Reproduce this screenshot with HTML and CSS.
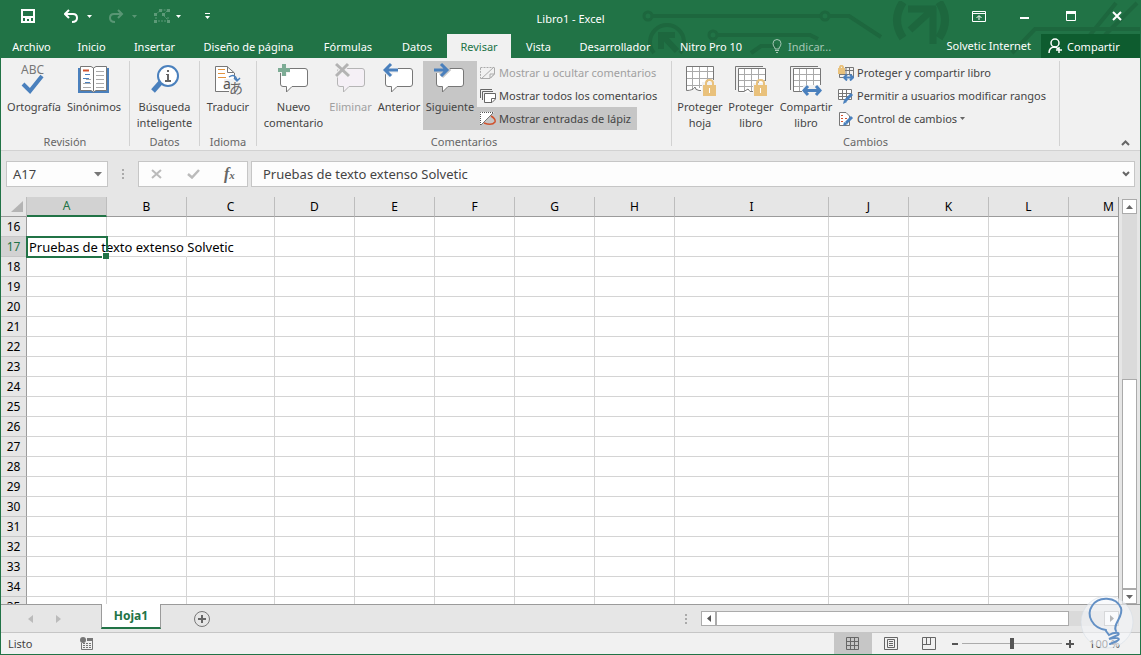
FILE: index.html
```html
<!DOCTYPE html>
<html lang="es">

<head>
    <meta charset="UTF-8">
    <meta name="viewport" content="width=device-width, initial-scale=1.0">
    <title>Libro1 - Excel</title>
    <link rel="stylesheet" href="styles.css">
</head>

<body>
    <header class="header">
        <svg class="circuit" width="500" height="57" fill="none" stroke="#1d673e" stroke-width="4">
            <circle cx="8" cy="15" r="4" stroke-width="3" />
            <path d="M12 15H181" />
            <circle cx="185" cy="15" r="4" stroke-width="3" />
            <path d="M189 15H209L241 36" />
            <circle cx="73" cy="34" r="4" stroke-width="3" />
            <path d="M77 34H170L178 38" />
            <path d="M14 52A17 17 0 1 1 40 52" />
            <path d="M21 34H35M21 31V48M22 34L37 50" stroke-width="6" />
            <path d="M111 52L121 45H137" />
            <path d="M263 1Q251 19 263 37M299 1Q311 19 299 37" stroke-width="8" />
            <path d="M270 29L292 9M268 8H296M293 6V43" stroke-width="7" />
            <path d="M372 52L395 28H500M450 34L476 2M465 34L497 2" />
        </svg>
        <div class="title-bar">
            <div class="quick-access">
                <button class="save" aria-label="Guardar">
                    <svg width="14" height="14" fill="none" stroke="#fff" stroke-width="2"><path d="M1 1H13V13H1ZM2 8H12" /><path d="M4 9H10V13H8V10H6V13H4Z" fill="#fff" stroke="none" /></svg>
                </button>
                <button class="split" aria-label="Deshacer">
                    <svg width="15" height="14" fill="none" stroke="#fff" stroke-width="2"><path d="M5 1L1 5L5 9M1 5H9Q13 5 13 9Q13 13 8 13" /></svg>
                    <svg width="5" height="3"><path d="M0 0H5L2.500 3Z" fill="#fff" /></svg>
                </button>
                <button class="split faded" aria-label="Rehacer">
                    <svg width="15" height="14" fill="none" stroke="#fff" stroke-width="2"><path d="M9 1L13 5L9 9M13 5H5Q1 5 1 9Q1 13 6 13" /></svg>
                    <svg width="5" height="3"><path d="M0 0H5L2.500 3Z" fill="#fff" /></svg>
                </button>
                <button class="split shapes" aria-label="Seleccionar objetos">
                    <svg width="16" height="14" fill="none" stroke="#5d9a78"><path d="M2 5V12H14V8M2 5L7 1H14L9 6L14 11" stroke-dasharray="2 1" /><path d="M0 4H3V7H0ZM5 0H8V3H5ZM13 0H16V3H13ZM0 11H3V14H0ZM13 11H16V14H13ZM8 4H11V7H8Z" fill="#5d9a78" stroke="none" /></svg>
                    <svg width="5" height="3"><path d="M0 0H5L2.500 3Z" fill="#fff" /></svg>
                </button>
                <button class="customize" aria-label="Personalizar barra">
                    <svg width="5" height="6" fill="#fff"><path d="M0 0H5V1H0ZM0 3H5L2.500 6Z" /></svg>
                </button>
            </div>
            <h1>Libro1 - Excel</h1>
            <div class="window-buttons">
                <button aria-label="Opciones de la cinta"><svg width="14" height="11" fill="none" stroke="#fff"><path d="M.5 .5H13.500V10.500H.5ZM1 2.500H13M7 9V5M4.500 7L7 4.500L9.500 7" /></svg></button>
                <button aria-label="Minimizar"><svg width="10" height="11"><path d="M0 6H9V8H0Z" fill="#fff" /></svg></button>
                <button aria-label="Maximizar"><svg width="10" height="10" fill="none" stroke="#fff"><path d="M.5 .5H9.500V9.500H.5Z" /><path d="M0 1.500H10" stroke-width="3" /></svg></button>
                <button aria-label="Cerrar"><svg width="10" height="10"><path d="M1 1L9 9M9 1L1 9" stroke="#fff" stroke-width="2" /></svg></button>
            </div>
        </div>
        <div class="tab-bar">
            <nav class="tabs">
                <button>Archivo</button>
                <button>Inicio</button>
                <button>Insertar</button>
                <button>Diseño de página</button>
                <button>Fórmulas</button>
                <button>Datos</button>
                <button class="active">Revisar</button>
                <button>Vista</button>
                <button>Desarrollador</button>
                <button>Nitro Pro 10</button>
            </nav>
            <button class="tell-me">
                <svg width="10" height="14" fill="none" stroke="#a6c7b5"><path d="M3 10V9Q1 7 1 4.500A4 4 0 0 1 9 4.500Q9 7 7 9V10ZM3 11.500H7M4 13.500H6" /></svg>
                Indicar...
            </button>
            <span class="user">Solvetic Internet</span>
            <button class="share">
                <svg width="15" height="16" fill="none" stroke="#fff" stroke-width="1.500"><circle cx="7" cy="5" r="4" /><path d="M1 15Q1 9 7 9M6 9Q9 9 10 11M11 9V15M8 12H14" /></svg>
                Compartir
            </button>
        </div>
    </header>

    <main class="ribbon">
        <section class="group revision">
            <div class="tools">
                <button class="big">
                    <svg width="28" height="34"><text x="1" y="12" class="abc">ABC</text><path d="M3 22L10 29L22 14" fill="none" stroke="#4a80bd" stroke-width="4" /></svg>
                    Ortografía
                </button>
                <button class="big">
                    <svg width="32" height="34" fill="none"><path d="M0 6H31V31H0Z" fill="#4a80bd" /><path d="M2.500 4.500H13L15.500 6L18 4.500H28.500V28.500H18L15.500 30L13 28.500H2.500Z" fill="#fff" stroke="#777" /><path d="M15.500 6V29" stroke="#777" /><path d="M18 9.500H26M18 13.500H26M18 17.500H26M18 21.500H26M5 21.500H13M5 25.500H13M18 25.500H26M8 17.500H13" stroke="#aaa" /><path d="M5 8.500H11" stroke="#d0532f" stroke-width="2" /><path d="M7 12.500H12M5 16.500H11M7 20.500H12" stroke="#4a80bd" /></svg>
                    Sinónimos
                </button>
            </div>
            <h2>Revisión</h2>
        </section>
        <section class="group data">
            <div class="tools">
                <button class="big">
                    <svg width="28" height="34"><path d="M10 20L2 29" stroke="#4a80bd" stroke-width="5" /><circle cx="17" cy="14" r="10" fill="#fff" stroke="#4a80bd" stroke-width="2" /><path d="M16 8H18V10H16ZM15 12H18V18H20V20H14V18H16V13H15Z" fill="#666" /></svg>
                    Búsqueda<br>inteligente
                </button>
            </div>
            <h2>Datos</h2>
        </section>
        <section class="group language">
            <div class="tools">
                <button class="big">
                    <svg width="30" height="34"><path d="M2.500 4.500H14L21.500 11V29.500H2.500Z" fill="#fff" stroke="#777" /><path d="M14.500 4.500V10.500H21" fill="none" stroke="#777" /><path d="M5 7.500H12M5 11.500H12M5 15.500H13" stroke="#e3943e" /><path d="M11 17H30V34H16V28H11Z" fill="#f1f1f1" /><path d="M16 15Q22 11 24 18M21 16L24 19L27 16" fill="none" stroke="#4a80bd" stroke-width="1.500" /><text x="10" y="27" class="latin">a</text><text x="16" y="31" class="kana">あ</text></svg>
                    Traducir
                </button>
            </div>
            <h2>Idioma</h2>
        </section>
        <section class="group comments">
            <div class="tools">
                <button class="big">
                    <svg width="32" height="34"><path d="M5 6.500H27Q29.500 6.500 29.500 9V22Q29.500 24.500 27 24.500H14L8.500 30V24.500H5Q2.500 24.500 2.500 22V9Q2.500 6.500 5 6.500Z" fill="#fff" stroke="#777" /><path d="M0 8H12M6 2V14" stroke="#f1f1f1" stroke-width="6" /><path d="M0 8H12M6 2V14" stroke="#7dac95" stroke-width="4" /></svg>
                    Nuevo<br>comentario
                </button>
                <button class="big" disabled>
                    <svg width="32" height="34"><path d="M5 6.500H27Q29.500 6.500 29.500 9V22Q29.500 24.500 27 24.500H14L8.500 30V24.500H5Q2.500 24.500 2.500 22V9Q2.500 6.500 5 6.500Z" fill="#f5f0f6" stroke="#b5b5b5" /><path d="M1 2L14 14M13 2L1 14" stroke="#f1f1f1" stroke-width="5" /><path d="M1 2L14 14M13 2L1 14" stroke="#b3b3b3" stroke-width="3" /></svg>
                    Eliminar
                </button>
                <button class="big">
                    <svg width="32" height="34"><path d="M5 6.500H27Q29.500 6.500 29.500 9V22Q29.500 24.500 27 24.500H14L8.500 30V24.500H5Q2.500 24.500 2.500 22V9Q2.500 6.500 5 6.500Z" fill="#fff" stroke="#777" /><path d="M1 8H15M8 2L3 8L8 14" fill="none" stroke="#f1f1f1" stroke-width="6" /><path d="M2 8H15M8 2L2 8L8 14" fill="none" stroke="#4a80bd" stroke-width="3" /></svg>
                    Anterior
                </button>
                <button class="big pressed">
                    <svg width="32" height="34"><path d="M5 6.500H27Q29.500 6.500 29.500 9V22Q29.500 24.500 27 24.500H14L8.500 30V24.500H5Q2.500 24.500 2.500 22V9Q2.500 6.500 5 6.500Z" fill="#fff" stroke="#777" /><path d="M0 8H13M7 2L13 8L7 14" fill="none" stroke="#c6c6c6" stroke-width="6" /><path d="M0 8H13M7 2L13 8L7 14" fill="none" stroke="#4a80bd" stroke-width="3" /></svg>
                    Siguiente
                </button>
                <div class="small-tools">
                    <button disabled><svg width="16" height="16" fill="none" stroke="#aaa"><path d="M.5 2.500H14.500V9L10 13.500H.5Z" stroke-dasharray="2 1" /><path d="M1 14L14 2M14.500 3V9L10 13.500H1M10 13V9H14" /></svg>Mostrar u ocultar comentarios</button>
                    <button><svg width="16" height="16" fill="none" stroke="#666"><path d="M.5 10V1.500H12M2.500 12V3.500H13" /><path d="M4.500 5.500H15.500V11L12 14.500H4.500ZM11.500 14V10.500H15" fill="#fff" /></svg>Mostrar todos los comentarios</button>
                    <button class="pressed"><svg width="16" height="16" fill="none"><path d="M0 1H14L1 14H0Z" fill="#fff" /><path d="M.5 14V1.500H14" stroke="#555" stroke-dasharray="1 1" /><path d="M1 14L13 2" stroke="#777" /><path d="M11 5Q16 8 15 11Q12 15 4 12" stroke="#d0532f" stroke-width="1.500" /></svg>Mostrar entradas de lápiz</button>
                </div>
            </div>
            <h2>Comentarios</h2>
        </section>
        <section class="group changes">
            <div class="tools">
                <button class="big">
                    <svg width="32" height="34" fill="none"><path d="M2.500 4.500H29.500V28.500H15L12 25.500L8 28.500H2.500Z" fill="#fff" /><path d="M8.500 5V28M15.500 5V26M23.500 5V26M3 9.500H29M3 16.500H29M3 23.500H29" stroke="#aaa" /><path d="M17 28.500H15Q11 28 11 25Q9 28.500 2.500 28.500V4.500H29.500V18" stroke="#777" /><path d="M18 20H32V34H18Z" fill="#f1f1f1" /><path d="M22 24V21Q22 18 25.500 18Q29 18 29 21V24" stroke="#e9c17b" stroke-width="2" /><path d="M19 23H32V34H19Z" fill="#e9c17b" /><path d="M25 26H26V31H25Z" fill="#fff" /></svg>
                    Proteger<br>hoja
                </button>
                <button class="big">
                    <svg width="32" height="34" fill="none"><path d="M.5 28V4.500H28" stroke="#777" /><path d="M3.500 6.500H30.500V30.500H3.500Z" fill="#fff" /><path d="M9.500 7V29M16.500 7V29M23.500 7V29M4 12.500H30M4 18.500H30M4 24.500H30" stroke="#aaa" /><path d="M18 29.500H15L13 27L9 29.500H3.500V6.500H30.500V19" stroke="#777" /><path d="M18 21H32V34H18Z" fill="#f1f1f1" /><path d="M22 24V21Q22 18 25.500 18Q29 18 29 21V24" stroke="#e9c17b" stroke-width="2" /><path d="M19 23H32V34H19Z" fill="#e9c17b" /><path d="M25 26H26V31H25Z" fill="#fff" /></svg>
                    Proteger<br>libro
                </button>
                <button class="big">
                    <svg width="32" height="34" fill="none"><path d="M.5 28V4.500H28" stroke="#777" /><path d="M3.500 6.500H30.500V29.500H3.500Z" fill="#fff" /><path d="M9.500 7V29M16.500 7V29M23.500 7V29M4 12.500H30M4 18.500H30M4 24.500H30" stroke="#aaa" /><path d="M12 29.500H3.500V6.500H30.500V24" stroke="#777" /><path d="M13 23H32V34H13Z" fill="#f1f1f1" /><path d="M14 28.500H30M18 24L14 28.500L18 33M26 24L30 28.500L26 33" stroke="#4a80bd" stroke-width="3" /></svg>
                    Compartir<br>libro
                </button>
                <div class="small-tools">
                    <button><svg width="16" height="16" fill="none"><path d="M7 2.500H15.500V12M1.500 8V12.500H6M7 5.500H15M8 2V9M11.500 2V9M2 9.500H14" stroke="#777" /><path d="M2 4V2Q3.500 -1 5 2V4" stroke="#e9c17b" stroke-width="2" /><path d="M0 3H7V9H0Z" fill="#e9c17b" /><path d="M6 12.500H15M9 9.500L6 12.500L9 15.500M12 9.500L15 12.500L12 15.500" stroke="#4a80bd" stroke-width="2" /></svg>Proteger y compartir libro</button>
                    <button><svg width="16" height="16" fill="none"><path d="M.5 1.500H13.500V11.500H.5ZM1 5.500H13M1 8.500H13M4.500 2V11M8.500 2V11" fill="#fff" stroke="#777" /><path d="M14 6L7 13" stroke="#4a80bd" stroke-width="3" /><path d="M5 16L6 12L9 14Z" fill="#4a80bd" /></svg>Permitir a usuarios modificar rangos</button>
                    <button><svg width="16" height="16" fill="none"><path d="M1.500 1.500H8L11.500 5V14.500H1.500Z" fill="#fff" stroke="#777" /><path d="M3 4.500H5M3 7.500H5M3 10.500H5M7 7.500H9" stroke="#d0532f" /><path d="M14 6L8 12" stroke="#4a80bd" stroke-width="3" /><path d="M5 15L6 11L10 13Z" fill="#4a80bd" /></svg>Control de cambios<svg width="5" height="3"><path d="M0 0H5L2.500 3Z" fill="#666" /></svg></button>
                </div>
            </div>
            <h2>Cambios</h2>
        </section>
        <button class="collapse" aria-label="Contraer la cinta"><svg width="9" height="6" fill="none" stroke="#666" stroke-width="2"><path d="M1 5L4.500 1.500L8 5" /></svg></button>
    </main>

    <div class="formula-bar">
        <button class="name-box">A17<svg width="8" height="5"><path d="M0 0H8L4 4.500Z" fill="#777" /></svg></button>
        <svg class="grip" width="2" height="10" fill="#aaa"><path d="M0 0H2V2H0ZM0 4H2V6H0ZM0 8H2V10H0Z" /></svg>
        <div class="formula-buttons">
            <button aria-label="Cancelar"><svg width="11" height="10"><path d="M1 1L10 9M10 1L1 9" stroke="#bbb" stroke-width="2" /></svg></button>
            <button aria-label="Introducir"><svg width="13" height="10" fill="none"><path d="M1 5L5 8.500L12 1" stroke="#bbb" stroke-width="2.500" /></svg></button>
            <button class="fx">f<small>x</small></button>
        </div>
        <div class="formula">
            <input type="text" aria-label="Barra de fórmulas" value="Pruebas de texto extenso Solvetic">
            <svg width="8" height="6" fill="none" stroke="#666" stroke-width="2"><path d="M1 1L4 4L7 1" /></svg>
        </div>
    </div>

    <div class="sheet-area">
        <div class="sheet">
            <table>
                <thead>
                    <tr>
                        <th class="corner"><svg width="13" height="12"><path d="M12 0V11H0Z" fill="#b4b4b4" /></svg></th>
                        <th class="selected">A</th>
                        <th>B</th>
                        <th class="wide">C</th>
                        <th>D</th>
                        <th>E</th>
                        <th>F</th>
                        <th>G</th>
                        <th>H</th>
                        <th class="widest">I</th>
                        <th>J</th>
                        <th>K</th>
                        <th>L</th>
                        <th>M</th>
                    </tr>
                </thead>
                <tbody id="rows"></tbody>
            </table>
        </div>
        <div class="scroll-v">
            <button aria-label="Arriba"><svg width="7" height="4"><path d="M0 4L3.500 0L7 4Z" fill="#666" /></svg></button>
            <div class="track"><div class="thumb"></div></div>
            <button aria-label="Abajo"><svg width="7" height="4"><path d="M0 0L3.500 4L7 0Z" fill="#666" /></svg></button>
        </div>
    </div>

    <div class="sheet-tabs">
        <div class="sheet-nav">
            <button aria-label="Hoja anterior"><svg width="5" height="8"><path d="M5 0V8L0 4Z" fill="#bbb" /></svg></button>
            <button aria-label="Hoja siguiente"><svg width="5" height="8"><path d="M0 0V8L5 4Z" fill="#bbb" /></svg></button>
        </div>
        <button class="sheet-tab">Hoja1</button>
        <button class="add-sheet" aria-label="Hoja nueva"><svg width="16" height="16" fill="none" stroke="#777"><circle cx="8" cy="8" r="7.500" /><path d="M8 4V12M4 8H12" stroke="#666" stroke-width="2" /></svg></button>
        <svg class="grip" width="2" height="10" fill="#aaa"><path d="M0 0H2V2H0ZM0 4H2V6H0ZM0 8H2V10H0Z" /></svg>
        <div class="scroll-h">
            <button aria-label="Izquierda"><svg width="4" height="7"><path d="M4 0V7L0 3.500Z" fill="#555" /></svg></button>
            <div class="track"><div class="thumb"></div></div>
            <button aria-label="Derecha"><svg width="4" height="7"><path d="M0 0V7L4 3.500Z" fill="#555" /></svg></button>
        </div>
    </div>

    <footer class="status-bar">
        <span>Listo</span>
        <button class="macro" aria-label="Grabar macro"><svg width="14" height="13" fill="none" stroke="#777"><path d="M3 6.500H12M3 8.500H12M3 10.500H12" stroke-dasharray="2 1" /><path d="M1.500 6V12.500H12.500V4" /><path d="M7 2.500H13" stroke-width="3" /><circle cx="3" cy="3" r="3" fill="#777" stroke="none" /></svg></button>
        <div class="views">
            <button class="pressed" aria-label="Normal"><svg width="14" height="14" fill="none" stroke="#666"><path d="M.5 .5H12.500V12.500H.5ZM4.500 1V12M8.500 1V12M1 4.500H12M1 8.500H12" /></svg></button>
            <button aria-label="Diseño de página"><svg width="14" height="14" fill="none" stroke="#666"><path d="M.5 .5H13.500V12.500H.5ZM3.500 2.500H10.500V10.500H3.500ZM5 4.500H9M5 6.500H9M5 8.500H9" /></svg></button>
            <button aria-label="Saltos de página"><svg width="14" height="14" fill="none" stroke="#666"><path d="M.5 .5H13.500V12.500H.5ZM1 7.500H9M4.500 1V7M8.500 1V8" /></svg></button>
        </div>
        <button class="zoom-step" aria-label="Alejar"><svg width="6" height="2"><path d="M0 0H6V2H0Z" fill="#555" /></svg></button>
        <input class="zoom" type="range" aria-label="Zoom" min="0" max="200" value="100">
        <button class="zoom-step" aria-label="Acercar"><svg width="8" height="8"><path d="M0 3H3V0H5V3H8V5H5V8H3V5H0Z" fill="#555" /></svg></button>
        <span class="percent">100 %</span>
    </footer>

    <svg class="badge" width="54" height="54" fill="none"><circle cx="27" cy="27" r="26" fill="#f5f7fa" fill-opacity=".6" stroke="#d5dde6" stroke-opacity=".6" /><g stroke="#6390c5" stroke-width="2" stroke-linecap="round"><path d="M26 35C12 33 6 20 12 11C18 1 36 1 41 13C44 21 32 30 36 36" /><path d="M26 36L29 40C34 37 41 37 38 40L29 44C36 42 42 43 37 46L30 49" /></g></svg>

    <script>
        let rowsRef = document.getElementById("rows");

        for (let i = 16; i <= 35; i++) {
            let row = document.createElement("tr");
            row.innerHTML = "<th>" + i + "</th>" + "<td></td>".repeat(13);
            if (i == 17) {
                row.className = "current";
                row.cells[1].className = "cursor";
                row.cells[1].innerText = "Pruebas de texto extenso Solvetic";
            }
            rowsRef.appendChild(row);
        }
    </script>
</body>

</html>
```
FILE: styles.css
```css
* {
    padding: 0;
    margin: 0;
    box-sizing: border-box;
    font-family: "Noto Sans", "Open Sans", sans-serif;
}

body {
    height: 100vh;
    display: flex;
    flex-direction: column;
    overflow: hidden;
    position: relative;
    border: 1px solid #217346;
    background: #e6e6e6;
    font-size: 11px;
    color: #444444;
}

button {
    border: none;
    background: none;
    color: inherit;
    font-size: inherit;
    white-space: nowrap;
}

svg {
    display: block;
    flex-shrink: 0;
}

/* title and tabs */

.header {
    position: relative;
    background: #217346;
    color: #ffffff;
}

.circuit {
    position: absolute;
    right: 0;
    top: 0;
}

.title-bar {
    position: relative;
    height: 33px;
    display: grid;
    grid-template-columns: 1fr auto 1fr;
    align-items: center;
}

.title-bar h1 {
    padding-top: 2px;
    font-size: 11px;
    font-weight: normal;
}

.quick-access {
    display: flex;
    align-items: center;
    gap: 17px;
    padding: 0 0 3px 20px;
}

.save {
    padding-right: 12px;
}

.customize {
    padding-left: 7px;
}

.split {
    display: flex;
    align-items: center;
    gap: 8px;
}

.faded {
    opacity: 0.25;
}

.shapes {
    gap: 6px;
}

.window-buttons {
    display: flex;
    justify-content: flex-end;
    padding-bottom: 3px;
}

.window-buttons button {
    width: 46px;
    display: flex;
    align-items: center;
    justify-content: center;
}

.tab-bar {
    position: relative;
    height: 24px;
    display: flex;
}

.tabs {
    display: grid;
    grid-template-columns: 61px 59px 67px 121px 78px 60px 64px 55px 98px 94px;
}

.tabs .active {
    background: #f1f1f1;
    color: #217346;
}

.tell-me {
    display: flex;
    align-items: center;
    gap: 6px;
    padding-left: 14px;
    color: #a6c7b5;
}

.user {
    margin-left: auto;
    padding-right: 10px;
    line-height: 24px;
}

.share {
    width: 99px;
    display: flex;
    align-items: center;
    gap: 4px;
    padding-left: 7px;
    background: #0e5c2f;
}

/* ribbon */

.ribbon {
    display: flex;
    height: 93px;
    padding: 3px 0 4px;
    background: #f1f1f1;
    border-bottom: 1px solid #d2d2d2;
}

.group {
    display: flex;
    flex-direction: column;
    justify-content: space-between;
    border-right: 1px solid #d2d2d2;
}

.group h2 {
    font-size: 11px;
    font-weight: normal;
    line-height: 9px;
    text-align: center;
    color: #666666;
}

.tools {
    display: grid;
    justify-content: start;
}

.revision {
    width: 129px;
}

.revision .tools {
    grid-template-columns: 66px 54px;
}

.data {
    width: 70px;
}

.language {
    width: 57px;
}

.data .tools,
.language .tools {
    justify-content: center;
}

.comments {
    width: 415px;
}

.comments .tools {
    grid-template-columns: 65px 49px 48px 54px auto;
    padding-left: 4px;
}

.changes {
    width: 388px;
}

.changes .tools {
    grid-template-columns: 50px 52px 58px auto;
    padding-left: 3px;
}

.big {
    height: 69px;
    display: flex;
    flex-direction: column;
    align-items: center;
    padding-top: 1px;
    gap: 3px;
    line-height: 16px;
}

.big:disabled,
.small-tools button:disabled {
    color: #a0a0a0;
}

.pressed {
    background: #c6c6c6;
}

.abc {
    font-size: 12px;
    fill: #777777;
}

.latin {
    font-size: 14px;
    fill: #555555;
}

.kana {
    font-family: "Noto Sans CJK JP", sans-serif;
    font-size: 14px;
    fill: #666666;
}

.small-tools {
    display: flex;
    flex-direction: column;
    align-items: flex-start;
}

.small-tools button {
    height: 23px;
    display: flex;
    align-items: center;
    gap: 3px;
    padding: 0 6px 0 3px;
}

.collapse {
    margin-left: auto;
    align-self: flex-end;
    padding: 0 10px 0;
}

/* formula bar */

.formula-bar {
    display: flex;
    align-items: center;
    height: 46px;
    padding: 0 5px;
}

.name-box,
.formula-buttons,
.formula {
    height: 26px;
    display: flex;
    align-items: center;
    background: #fdfdfd;
    border: 1px solid #c6c6c6;
    font-size: 13px;
}

.name-box {
    width: 102px;
    justify-content: space-between;
    padding: 0 5px 0 6px;
}

.grip {
    margin: 0 14px;
}

.formula-buttons {
    width: 110px;
    justify-content: space-around;
}

.formula-buttons .fx {
    font-family: "Liberation Serif", serif;
    font-size: 16px;
    font-style: italic;
    font-weight: bold;
    color: #666666;
}

.fx small {
    font-family: "Liberation Serif", serif;
    font-size: 11px;
}

.formula {
    flex: 1;
    margin-left: 3px;
    padding: 0 4px 0 11px;
}

.formula input {
    flex: 1;
    border: none;
    outline: none;
    background: none;
    font-size: 13px;
    color: #444444;
}

/* grid */

.sheet-area {
    flex: 1;
    min-height: 0;
    display: flex;
}

.sheet {
    flex: 1;
    min-width: 0;
    overflow: hidden;
    background: linear-gradient(#e6e6e6 20px, #ffffff 20px);
    border-right: 1px solid #9b9b9b;
}

table {
    width: 1148px;
    table-layout: fixed;
    border-collapse: separate;
    border-spacing: 0;
    font-size: 13px;
    color: #000000;
}

th,
td {
    height: 20px;
    line-height: 18px;
    border-right: 1px solid #d4d4d4;
    border-bottom: 1px solid #d4d4d4;
    white-space: nowrap;
}

th {
    width: 80px;
    font-weight: normal;
    background: #e6e6e6;
}

thead th {
    font-size: 12px;
    border-bottom-color: #9b9b9b;
    border-right-color: #bdbdbd;
}

tbody th {
    font-size: 12px;
    border-right-color: #9b9b9b;
    border-bottom-color: #c6c6c6;
}

.corner {
    width: 26px;
    padding-left: 10px;
}

.wide {
    width: 88px;
}

.widest {
    width: 154px;
}

thead .selected {
    background: #d2d2d2;
    border-bottom: 2px solid #217346;
    color: #217346;
}

.current th {
    background: #d2d2d2;
    color: #217346;
}

.current td:nth-child(3) {
    border-right-color: transparent;
}

.cursor {
    position: relative;
    padding-left: 2px;
}

.cursor::before {
    content: "";
    position: absolute;
    inset: -1px -2px -2px -1px;
    border: 2px solid #217346;
}

.cursor::after {
    content: "";
    position: absolute;
    right: -3px;
    bottom: -3px;
    width: 6px;
    height: 6px;
    background: #217346;
    border: 1px solid #ffffff;
    border-width: 1px 0 0 1px;
}

.scroll-v {
    width: 21px;
    display: flex;
    flex-direction: column;
    padding: 2px 3px 0;
}

.scroll-v button,
.scroll-h button {
    width: 15px;
    height: 15px;
    display: flex;
    align-items: center;
    justify-content: center;
    background: #ffffff;
    border: 1px solid #ababab;
}

.track {
    flex: 1;
    display: flex;
    background: #dadada;
}

.thumb {
    background: #ffffff;
    border: 1px solid #ababab;
}

.scroll-v .track {
    align-items: flex-end;
}

.scroll-v .thumb {
    width: 100%;
    height: 56%;
}

/* sheet tabs */

.sheet-tabs {
    display: flex;
    align-items: center;
    height: 28px;
    border-top: 1px solid #9b9b9b;
}

.sheet-nav {
    width: 100px;
    display: flex;
    gap: 23px;
    padding-left: 27px;
}

.sheet-tab {
    align-self: flex-start;
    width: 60px;
    height: 25px;
    margin-top: -1px;
    background: #ffffff;
    border: 1px solid #9b9b9b;
    border-top: none;
    border-bottom: 2px solid #217346;
    font-size: 12px;
    font-weight: bold;
    color: #217346;
}

.add-sheet {
    margin-left: 33px;
    margin-right: auto;
}

.scroll-h {
    width: 418px;
    display: flex;
    margin-right: 21px;
}

.scroll-h .thumb {
    width: 91%;
}

/* status bar */

.status-bar {
    display: flex;
    align-items: center;
    height: 22px;
    padding: 0 20px 0 7px;
    background: #f1f1f1;
    border-top: 1px solid #c6c6c6;
}

.macro {
    margin-left: 47px;
}

.views {
    display: flex;
    margin-left: auto;
}

.views button {
    width: 38px;
    height: 21px;
    display: flex;
    align-items: center;
    justify-content: center;
}

.zoom-step {
    margin: 0 4px;
}

.zoom {
    appearance: none;
    width: 100px;
    height: 11px;
    background: linear-gradient(transparent 5px, #ababab 5px, #ababab 6px, transparent 6px);
}

.zoom::-webkit-slider-thumb {
    appearance: none;
    width: 4px;
    height: 11px;
    background: #555555;
}

.percent {
    width: 42px;
    text-align: right;
}

.badge {
    position: absolute;
    right: 6px;
    bottom: 5px;
    pointer-events: none;
}
```
